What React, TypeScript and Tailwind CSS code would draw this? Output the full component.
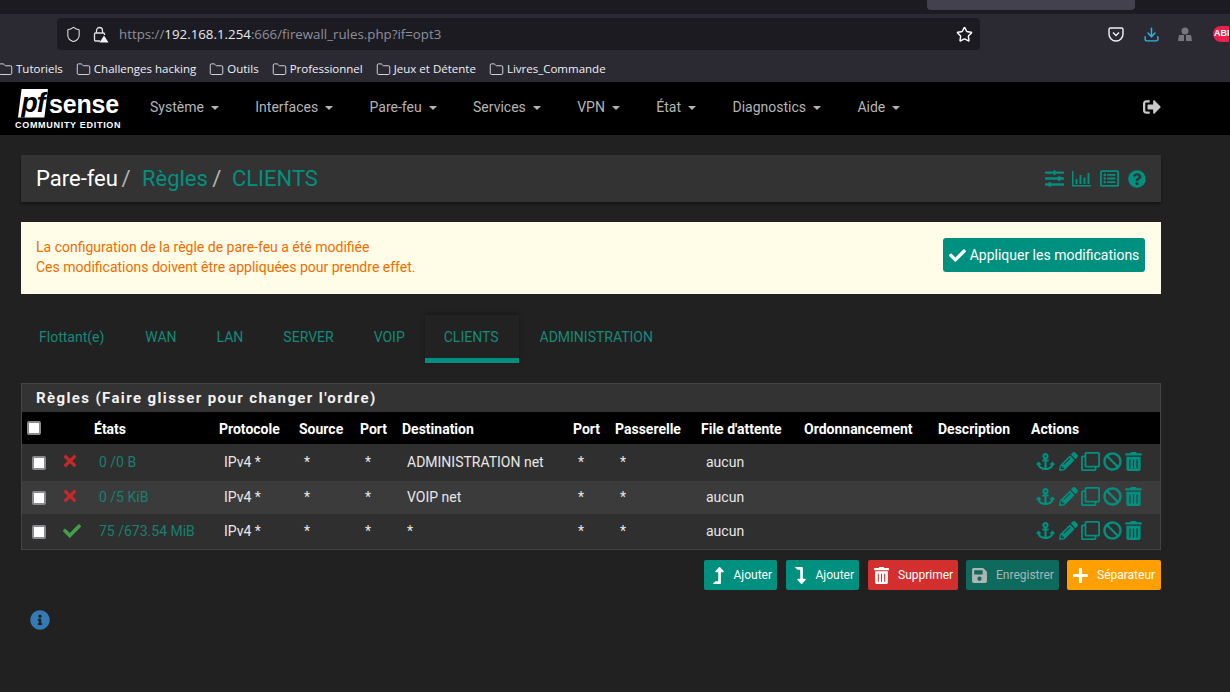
import { Folder, Shield, Star, Download } from "lucide-react";
import {
  FaAnchor,
  FaBan,
  FaCheck,
  FaInfoCircle,
  FaLevelDownAlt,
  FaLevelUpAlt,
  FaRegListAlt,
  FaPencilAlt,
  FaPlus,
  FaQuestionCircle,
  FaRegClone,
  FaSave,
  FaSignOutAlt,
  FaSlidersH,
  FaTimes,
  FaTrashAlt,
} from "react-icons/fa";

const bookmarks = ["Tutoriels", "Challenges hacking", "Outils", "Professionnel", "Jeux et Détente", "Livres_Commande"];
const navItems = ["Système", "Interfaces", "Pare-feu", "Services", "VPN", "État", "Diagnostics", "Aide"];
const tabs = ["Flottant(e)", "WAN", "LAN", "SERVER", "VOIP", "CLIENTS", "ADMINISTRATION"];
const headers = ["États", "Protocole", "Source", "Port", "Destination", "Port", "Passerelle", "File d'attente", "Ordonnancement", "Description", "Actions"];

const rules = [
  { ok: false, states: "0 /0 B", dest: "ADMINISTRATION net", bg: "bg-[#2f2f2f]", h: "h-[37px]" },
  { ok: false, states: "0 /5 KiB", dest: "VOIP net", bg: "bg-[#3b3b3b]", h: "h-[33px]" },
  { ok: true, states: "75 /673.54 MiB", dest: "*", bg: "bg-[#2f2f2f]", h: "h-[35px]" },
];

function Caret() {
  return <span className="ml-[7px] inline-block border-x-[4px] border-t-[4px] border-x-transparent border-t-[#b5b5b5] align-middle" />;
}

function Checkbox() {
  return <span className="block h-[14px] w-[14px] rounded-[2px] border-2 border-[#8a8a8f] bg-white" />;
}

function BarChartIcon() {
  return (
    <svg className="-ml-px" width="19" height="16" viewBox="0 0 19 16" fill="#00907f">
      <path d="M0 0h1.5v14H19v1.5H0z" />
      <rect x="3.5" y="8" width="2" height="5" />
      <rect x="7.5" y="4" width="2" height="9" />
      <rect x="11.5" y="6.500" width="2" height="6.500" />
      <rect x="15.500" y="2" width="2" height="11" />
    </svg>
  );
}

function LockWarning() {
  return (
    <svg className="ml-[10px]" width="17" height="17" viewBox="0 0 17 17" fill="none" stroke="#e0e0e6" strokeWidth="1.300">
      <path d="M4.500 7V4.500a3 3 0 0 1 6 0V7" />
      <path d="M8 15H3.500a1 1 0 0 1-1-1V8a1 1 0 0 1 1-1h8a1 1 0 0 1 1 1v1" />
      <path d="M12 9.500l4.500 7h-9z" fill="#f2f2f5" stroke="none" />
    </svg>
  );
}

function ExtensionFigure() {
  return (
    <svg className="ml-[18px]" width="14" height="15" viewBox="0 0 14 15" fill="#77767c">
      <circle cx="7" cy="4" r="3.500" />
      <path d="M1 8h5v6H0zM8 8h5l1 6H8z" />
    </svg>
  );
}

function PfLogo() {
  return (
    <div className="ml-[15px] flex w-[106px] shrink-0 flex-col">
      <div className="ml-[3px] flex h-[31px] items-end">
        <div className="flex h-[29px] w-[30px] items-center justify-center bg-white [clip-path:polygon(12%_0,100%_0,88%_100%,0_100%)]">
          <span className="font-['Liberation_Sans'] text-[27px] font-bold italic leading-none tracking-[-1px] text-black">pf</span>
        </div>
        <span className="ml-px font-['Liberation_Sans'] text-[25px] font-bold leading-[28px] tracking-[-0.2px] text-white">sense</span>
      </div>
      <span className="mt-[2px] whitespace-nowrap font-['Liberation_Sans'] text-[9px] font-bold leading-[11px] tracking-[0.7px] text-white">COMMUNITY EDITION</span>
    </div>
  );
}

function BrowserChrome() {
  return (
    <div className="bg-[#2b2a33] font-['Open_Sans',sans-serif]">
      <div className="flex h-[14px] justify-end bg-[#1c1b22] pr-[95px]">
        <div className="h-[10px] w-[208px] rounded-b-[4px] bg-[#42414d]" />
      </div>
      <div className="flex h-[36px] items-center pl-[57px] pt-[4px]">
        <div className="flex h-[32px] w-[923px] items-center rounded-[4px] bg-[#1c1b22] pl-[8px] pr-[7px]">
          <Shield size={17} strokeWidth={1.500} className="text-[#e0e0e6]" />
          <LockWarning />
          <span className="ml-[10px] flex-1 pt-[1px] text-[13.300px] text-[#8f8f9d]">
            https://<span className="text-[#e8e8ee]">192.168.1.254</span>:666/firewall_rules.php?if=opt3
          </span>
          <Star size={17} className="text-white" />
        </div>
        <svg className="ml-[128px]" width="16" height="15" viewBox="0 0 16 15" fill="none" stroke="#f2f2f5" strokeWidth="1.400">
          <path d="M1 2.500a1.500 1.500 0 0 1 1.500-1.500h11a1.500 1.500 0 0 1 1.500 1.500V7a7 7 0 0 1-14 0z" />
          <path d="M5 5.500l3 3 3-3" />
        </svg>
        <Download size={17} className="ml-[19px] text-[#2ab7e6]" />
        <ExtensionFigure />
        <div className="ml-[21px] flex h-[16px] w-[16px] shrink-0 items-center overflow-hidden rounded-l-full bg-[#e8214f] pl-[1px] font-['Liberation_Sans'] text-[9px] font-bold text-white">
          ABP
        </div>
      </div>
      <div className="flex h-[32px] items-center pt-[6px] text-[11.500px] text-[#f0f0f4]">
        <div className="-ml-[2px] flex items-center">
          {bookmarks.map(b => (
            <div key={b} className="mr-[13px] flex items-center gap-[3px]">
              <Folder size={15} strokeWidth={1.400} className="text-[#e8e8ee]" />
              <span className="whitespace-nowrap">{b}</span>
            </div>
          ))}
        </div>
      </div>
    </div>
  );
}

function NavBar() {
  return (
    <div className="flex h-[53px] items-center bg-black">
      <PfLogo />
      <nav className="mb-[2px] ml-[29px] flex gap-[36.400px] text-[14px] text-[#b5b5b5]">
        {navItems.map(n => (
          <span key={n} className="whitespace-nowrap">
            {n}
            <Caret />
          </span>
        ))}
      </nav>
      <FaSignOutAlt className="mb-[4px] ml-auto mr-[69px] text-[18px] text-[#c8c8c8]" />
    </div>
  );
}

export default function App() {
  return (
    <div className="h-[692px] w-[1230px] overflow-hidden bg-[#212121] font-['Roboto',sans-serif]">
      <BrowserChrome />
      <NavBar />

      <main className="mx-[21px] mr-[69px] pt-[20px]">
        <div className="flex h-[47px] items-center justify-between bg-[#333333] pl-[15px] pr-[15px] shadow-[0_2px_3px_rgba(0,0,0,0.4)]">
          <div className="text-[22px] leading-none">
            <span className="text-white">Pare-feu</span>
            <span className="ml-[-2px] text-[#b5b5b5]"> / </span>
            <span className="ml-[6px] text-[#00907f]">Règles</span>
            <span className="ml-[-1px] text-[#b5b5b5]"> / </span>
            <span className="ml-[5px] text-[#00907f]">CLIENTS</span>
          </div>
          <div className="flex items-center gap-[9px] text-[#00907f]">
            <FaSlidersH className="text-[19px]" />
            <BarChartIcon />
            <FaRegListAlt className="text-[19px]" />
            <FaQuestionCircle className="text-[18px]" />
          </div>
        </div>

        <div className="mt-[20px] flex h-[72px] items-start justify-between bg-[#fffde7] pl-[15px] pr-[16px] pt-[15px] text-[14px] leading-[20px] text-[#ef6c00]">
          <div>
            <p>La configuration de la règle de pare-feu a été modifiée</p>
            <p>Ces modifications doivent être appliquées pour prendre effet.</p>
          </div>
          <button className="mt-[1px] flex h-[34px] w-[202px] items-center justify-center gap-[4px] rounded-[3px] bg-[#00907f] text-[14px] text-white">
            <FaCheck className="text-[17px]" />
            Appliquer les modifications
          </button>
        </div>

        <div className="mt-[21px] flex h-[48px] text-[14px] text-[#148a78]">
          {tabs.map(t => (
            <div
              key={t}
              className={
                t === "CLIENTS"
                  ? "flex h-[48px] items-center border-b-[5px] border-[#00907f] bg-[#222222] pl-[19px] pr-[20px] pt-[1px] shadow-[0_-1px_5px_rgba(0,0,0,0.3)]"
                  : "flex h-[48px] items-center px-[20px] pb-[4px] first:pl-[18px] first:pr-[21px] last:pl-[21px]"
              }
            >
              {t}
            </div>
          ))}
        </div>

        <section className="mt-[20px] h-[167px] border border-[#444444] bg-[#333333]">
          <h2 className="flex h-[28px] items-center pl-[14px] text-[15px] font-bold tracking-[1.380px] text-[#f2f2f2]">Règles (Faire glisser pour changer l'ordre)</h2>
          <table className="w-[1138px] table-fixed text-[14px] text-[#e8e8e8]">
            <colgroup>
              <col className="w-[36px]" />
              <col className="w-[36px]" />
              <col className="w-[125px]" />
              <col className="w-[80px]" />
              <col className="w-[61px]" />
              <col className="w-[42px]" />
              <col className="w-[171px]" />
              <col className="w-[42px]" />
              <col className="w-[86px]" />
              <col className="w-[103px]" />
              <col className="w-[134px]" />
              <col className="w-[93px]" />
              <col />
            </colgroup>
            <thead>
              <tr className="h-[32px] bg-black text-left text-[14px] font-bold text-white">
                <th className="pl-[5px] font-bold">
                  <Checkbox />
                </th>
                <th />
                {headers.map((h, i) => (
                  <th key={i} className="whitespace-nowrap pt-[3px] font-bold">
                    {h}
                  </th>
                ))}
              </tr>
            </thead>
            <tbody>
              {rules.map(r => (
                <tr key={r.states} className={`${r.bg} ${r.h}`}>
                  <td className="pl-[10px]">
                    <Checkbox />
                  </td>
                  <td className="pl-[5px]">
                    {r.ok ? <FaCheck className="mb-[2px] text-[18px] text-[#43a047]" /> : <FaTimes className="-ml-[2px] mb-[3px] text-[18px] text-[#c62828]" />}
                  </td>
                  <td className="whitespace-nowrap pl-[5px] text-[#178070]">{r.states}</td>
                  <td className="pl-[5px]">IPv4 *</td>
                  <td className="pl-[5px]">*</td>
                  <td className="pl-[5px]">*</td>
                  <td className="whitespace-nowrap pl-[5px]">{r.dest}</td>
                  <td className="pl-[5px]">*</td>
                  <td className="pl-[5px]">*</td>
                  <td className="pl-[5px]">aucun</td>
                  <td />
                  <td />
                  <td className="pl-[5px]">
                    <div className="mb-[2px] flex items-center gap-[3px] text-[19px] text-[#00907f]">
                      <FaAnchor className="shrink-0" />
                      <FaPencilAlt className="ml-[1px] shrink-0" />
                      <FaRegClone className="shrink-0" />
                      <FaBan className="shrink-0" />
                      <FaTrashAlt className="-ml-[1px] shrink-0" />
                    </div>
                  </td>
                </tr>
              ))}
            </tbody>
          </table>
        </section>

        <div className="mt-[10px] flex justify-end gap-[8px] text-[12px]">
          <button className="flex h-[30px] w-[73px] items-center justify-between rounded-[2px] bg-[#00907f] pl-[6px] pr-[5px] text-white">
            <FaLevelUpAlt className="text-[17px]" />
            Ajouter
          </button>
          <button className="ml-px flex h-[30px] w-[73px] items-center justify-between rounded-[2px] bg-[#00907f] pl-[6px] pr-[5px] text-white">
            <FaLevelDownAlt className="text-[17px]" />
            Ajouter
          </button>
          <button className="ml-px flex h-[30px] w-[90px] items-center gap-[8px] rounded-[2px] bg-[#d32f2f] pl-[5px] text-white">
            <FaTrashAlt className="text-[17px]" />
            Supprimer
          </button>
          <button className="flex h-[30px] w-[93px] items-center gap-[8px] rounded-[2px] bg-[#0f6a5e] pl-[5px] text-[#a5b8b4]">
            <FaSave className="text-[17px] text-[#b0b5b4]" />
            Enregistrer
          </button>
          <button className="flex h-[30px] w-[94px] items-center gap-[8px] rounded-[2px] bg-[#ffa000] pl-[5px] text-white">
            <FaPlus className="text-[17px]" />
            Séparateur
          </button>
        </div>

        <FaInfoCircle className="ml-[9px] mt-[20px] text-[20px] text-[#337ab7]" />
      </main>
    </div>
  );
}
